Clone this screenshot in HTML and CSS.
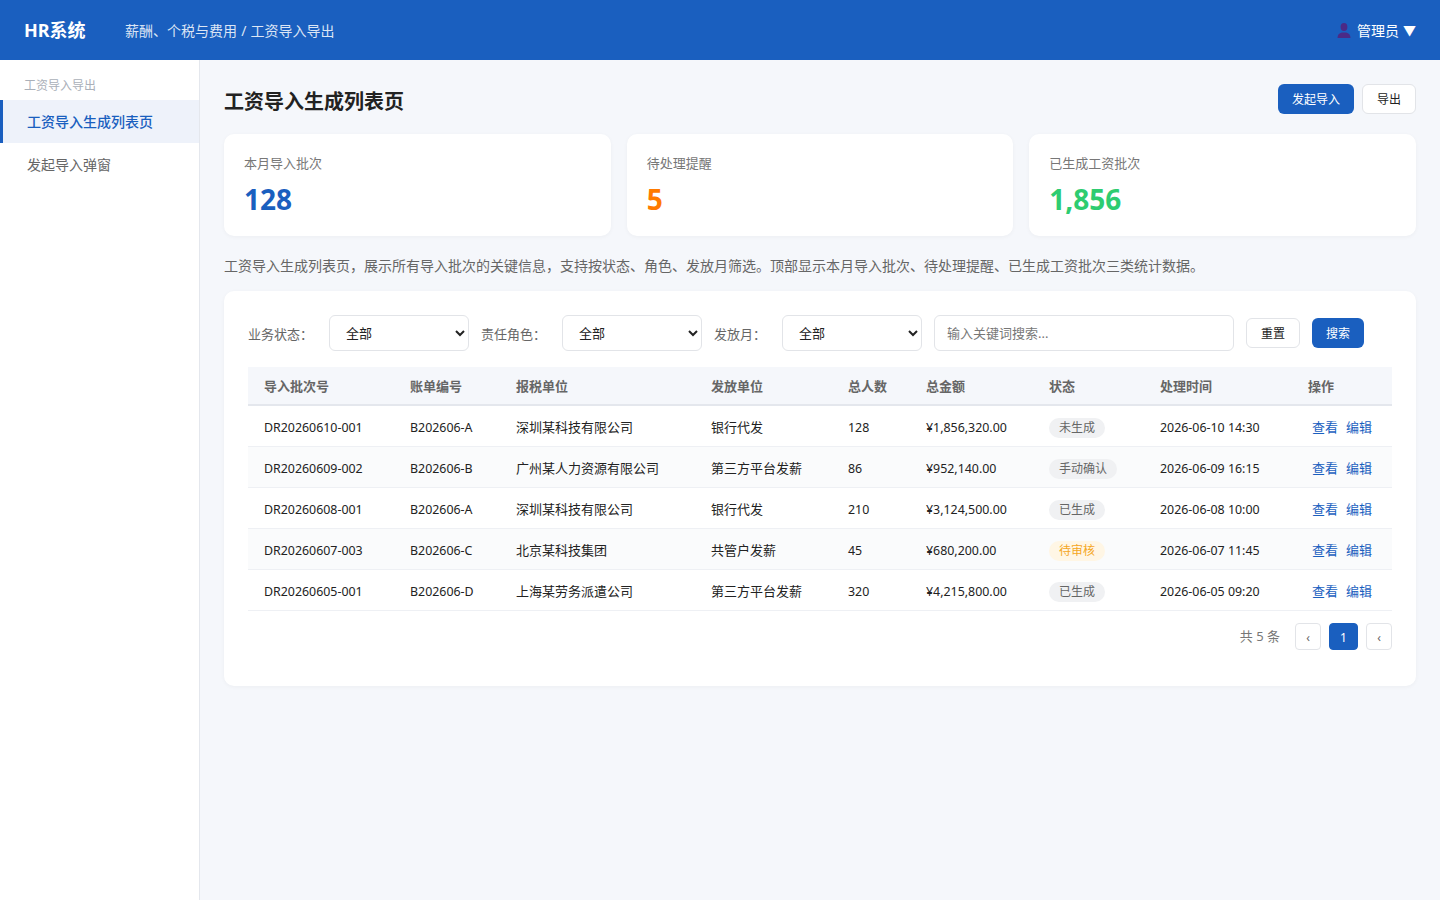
FILE: index.html
```html
<!DOCTYPE html>
<html lang="zh-CN">
	<head>
		<meta charset="UTF-8">
		<title>工资导入生成列表页</title>
		<link rel="stylesheet" href="styles.css">
	</head>
	<body>
		<div class="header">
			<div class="logo">HR系统</div>
			<div class="crumb">薪酬、个税与费用 / 工资导入导出</div>
			<div class="user">
				<svg class="userIcon" viewBox="0 0 14 15" width="14" height="15"><ellipse cx="7" cy="4" rx="3.4" ry="4"/><path d="M0.5 15c0-3.4 1.6-4.9 4.4-5.6h4.2c2.8.7 4.4 2.2 4.4 5.6z"/></svg>
				<span>管理员</span>
				<span class="caret">▼</span>
			</div>
		</div>
		<div class="layout">
			<div class="sidebar">
				<div class="sideTitle">工资导入导出</div>
				<a class="sideItem active">工资导入生成列表页</a>
				<a class="sideItem">发起导入弹窗</a>
			</div>
			<div class="main">
				<div class="pageHead">
					<h1>工资导入生成列表页</h1>
					<div class="pageBtns">
						<button class="btn primary">发起导入</button>
						<button class="btn">导出</button>
					</div>
				</div>
				<div class="stats">
					<div class="statCard">
						<div class="statLabel">本月导入批次</div>
						<div class="statValue blue">128</div>
					</div>
					<div class="statCard">
						<div class="statLabel">待处理提醒</div>
						<div class="statValue orange">5</div>
					</div>
					<div class="statCard">
						<div class="statLabel">已生成工资批次</div>
						<div class="statValue green">1,856</div>
					</div>
				</div>
				<p class="desc">工资导入生成列表页，展示所有导入批次的关键信息，支持按状态、角色、发放月筛选。顶部显示本月导入批次、待处理提醒、已生成工资批次三类统计数据。</p>
				<div class="panel">
					<div class="filters">
						<label>业务状态：</label>
						<select><option>全部</option></select>
						<label>责任角色：</label>
						<select><option>全部</option></select>
						<label>发放月：</label>
						<select><option>全部</option></select>
						<input type="text" placeholder="输入关键词搜索...">
						<button class="btn">重置</button>
						<button class="btn primary">搜索</button>
					</div>
					<table>
						<colgroup>
							<col class="c1"><col class="c2"><col class="c3"><col class="c4"><col class="c5"><col class="c6"><col class="c7"><col class="c8"><col class="c9">
						</colgroup>
						<thead>
							<tr>
								<th>导入批次号</th><th>账单编号</th><th>报税单位</th><th>发放单位</th><th>总人数</th><th>总金额</th><th>状态</th><th>处理时间</th><th>操作</th>
							</tr>
						</thead>
						<tbody>
							<tr>
								<td class="num">DR20260610-001</td><td class="num">B202606-A</td><td>深圳某科技有限公司</td><td>银行代发</td><td class="num">128</td><td class="num">¥1,856,320.00</td>
								<td><span class="tag">未生成</span></td><td class="num">2026-06-10 14:30</td>
								<td><a class="op">查看</a><a class="op">编辑</a></td>
							</tr>
							<tr>
								<td class="num">DR20260609-002</td><td class="num">B202606-B</td><td>广州某人力资源有限公司</td><td>第三方平台发薪</td><td class="num">86</td><td class="num">¥952,140.00</td>
								<td><span class="tag">手动确认</span></td><td class="num">2026-06-09 16:15</td>
								<td><a class="op">查看</a><a class="op">编辑</a></td>
							</tr>
							<tr>
								<td class="num">DR20260608-001</td><td class="num">B202606-A</td><td>深圳某科技有限公司</td><td>银行代发</td><td class="num">210</td><td class="num">¥3,124,500.00</td>
								<td><span class="tag">已生成</span></td><td class="num">2026-06-08 10:00</td>
								<td><a class="op">查看</a><a class="op">编辑</a></td>
							</tr>
							<tr>
								<td class="num">DR20260607-003</td><td class="num">B202606-C</td><td>北京某科技集团</td><td>共管户发薪</td><td class="num">45</td><td class="num">¥680,200.00</td>
								<td><span class="tag warn">待审核</span></td><td class="num">2026-06-07 11:45</td>
								<td><a class="op">查看</a><a class="op">编辑</a></td>
							</tr>
							<tr>
								<td class="num">DR20260605-001</td><td class="num">B202606-D</td><td>上海某劳务派遣公司</td><td>第三方平台发薪</td><td class="num">320</td><td class="num">¥4,215,800.00</td>
								<td><span class="tag">已生成</span></td><td class="num">2026-06-05 09:20</td>
								<td><a class="op">查看</a><a class="op">编辑</a></td>
							</tr>
						</tbody>
					</table>
					<div class="pager">
						<span class="total">共 5 条</span>
						<button class="pageBtn">‹</button>
						<button class="pageBtn current">1</button>
						<button class="pageBtn">‹</button>
					</div>
				</div>
			</div>
		</div>
	</body>
</html>
```

FILE: styles.css
```css
* {
	box-sizing: border-box;
}
html, body {
	height: 100%;
}
body {
	margin: 0;
	background-color: #f5f7fb;
	color: #222;
	font: 14px/1.5 "Noto Sans", "Noto Sans CJK SC", sans-serif;
}
button, select, input {
	font-family: inherit;
}
.header {
	display: flex;
	align-items: center;
	height: 60px;
	padding: 0 24px;
	background-color: #1a5fbf;
	color: #fff;
}
.logo {
	font-size: 18px;
	font-weight: 700;
	margin-right: 39.5px;
}
.crumb {
	font-size: 14px;
	word-spacing: .5px;
	color: rgba(255, 255, 255, .85);
}
.user {
	display: flex;
	align-items: center;
	margin-left: auto;
	font-size: 14px;
}
.userIcon {
	fill: #4b2a86;
	margin-right: 6px;
}
.caret {
	margin-left: 4px;
	padding-top: 1px;
	font-size: 13px;
}
.layout {
	display: flex;
	height: 840px;
}
.sidebar {
	flex: none;
	width: 200px;
	background-color: #fff;
	border-right: 1px solid #e4e7ed;
	padding-top: 17px;
}
.sideTitle {
	height: 23px;
	padding-left: 24px;
	font-size: 12px;
	line-height: 18px;
	color: #aab0b9;
}
.sideItem {
	display: block;
	height: 43px;
	padding-left: 27px;
	font-size: 14px;
	line-height: 43px;
	color: #666;
}
.sideItem.active {
	padding-left: 24px;
	border-left: 3px solid #1a5fbf;
	background-color: #eef2fa;
	color: #1a5fbf;
	font-weight: 500;
}
.main {
	flex: 1;
	padding: 24px;
}
.pageHead {
	display: flex;
	align-items: flex-start;
	justify-content: space-between;
	margin-bottom: 14px;
}
h1 {
	margin: 0;
	font-size: 20px;
	font-weight: 700;
	line-height: 36px;
	color: #222;
}
.pageBtns {
	display: flex;
	gap: 8px;
}
.btn {
	height: 30px;
	padding: 0 14px;
	border: 1px solid #e2e4e8;
	border-radius: 6px;
	background-color: #fff;
	color: #222;
	font-size: 12px;
}
.btn.primary {
	border: none;
	background-color: #1a5fbf;
	color: #fff;
}
.stats {
	display: flex;
	gap: 16px;
	margin-bottom: 20px;
}
.statCard {
	flex: 1;
	height: 102px;
	padding: 20px;
	border-radius: 10px;
	background-color: #fff;
	box-shadow: 0 1px 4px rgba(0, 0, 0, .04);
}
.statLabel {
	font-size: 13px;
	line-height: 18px;
	color: #777;
	margin-bottom: 7px;
}
.statValue {
	font-size: 28px;
	font-weight: 700;
	line-height: 40px;
}
.blue {
	color: #1a5fbf;
}
.orange {
	color: #ff7a00;
}
.green {
	color: #2ecc71;
}
.desc {
	margin: 0 0 16px;
	font-size: 14px;
	line-height: 19px;
	color: #666;
}
.panel {
	height: 395px;
	padding: 24px;
	border-radius: 10px;
	background-color: #fff;
	box-shadow: 0 1px 4px rgba(0, 0, 0, .04);
}
.filters {
	display: flex;
	align-items: center;
	height: 36px;
	margin-bottom: 16px;
}
.filters label {
	margin-right: 16px;
	padding-top: 3px;
	font-size: 13px;
	color: #666;
}
.filters select {
	width: 140px;
	height: 36px;
	padding: 0 12px;
	margin-right: 12px;
	border: 1px solid #e2e4e8;
	border-radius: 6px;
	background-color: #fff;
	color: #222;
	font-size: 13px;
}
.filters input {
	width: 300px;
	height: 36px;
	padding: 0 12px;
	margin-right: 12px;
	border: 1px solid #e2e4e8;
	border-radius: 6px;
	font-size: 13px;
}
.filters input::placeholder {
	color: #777;
}
.filters .btn + .btn {
	margin-left: 12px;
}
table {
	width: 1144px;
	table-layout: fixed;
	border-collapse: collapse;
	font-size: 13px;
}
.c1 { width: 146px; }
.c2 { width: 106px; }
.c3 { width: 195px; }
.c4 { width: 137px; }
.c5 { width: 78px; }
.c6 { width: 123px; }
.c7 { width: 111px; }
.c8 { width: 148px; }
.c9 { width: 100px; }
th {
	height: 38px;
	padding: 2px 16px 0;
	border-bottom: 2px solid #e4e7ed;
	background-color: #f5f7fb;
	color: #666;
	font-size: 13px;
	font-weight: 700;
	text-align: left;
}
td {
	height: 41px;
	padding: 4px 16px 0;
	border-bottom: 1px solid #eef0f4;
	color: #222;
	white-space: nowrap;
}
td.num {
	padding-top: 6px;
	font-size: 12.4px;
}
tbody tr:nth-child(even) td {
	background-color: #fafbfc;
}
.tag {
	display: inline-block;
	height: 20px;
	padding: 0 10px;
	border-radius: 10px;
	background-color: #f0f1f3;
	color: #666;
	font-size: 12px;
	line-height: 20px;
}
.tag.warn {
	background-color: #fff6e5;
	color: #f5a623;
}
.op {
	padding: 0 4px;
	color: #1a5fbf;
	font-size: 13px;
}
.pager {
	display: flex;
	align-items: center;
	justify-content: flex-end;
	gap: 8px;
	margin-top: 12px;
}
.total {
	margin-right: 7px;
	padding-top: 2px;
	font-size: 13px;
	color: #777;
}
.pageBtn {
	width: 26px;
	height: 27px;
	padding: 2px 0 0;
	border: 1px solid #e2e4e8;
	border-radius: 4px;
	background-color: #fff;
	color: #666;
	font-size: 12px;
}
.pageBtn.current {
	width: 29px;
	border-color: #1a5fbf;
	background-color: #1a5fbf;
	color: #fff;
}
```
